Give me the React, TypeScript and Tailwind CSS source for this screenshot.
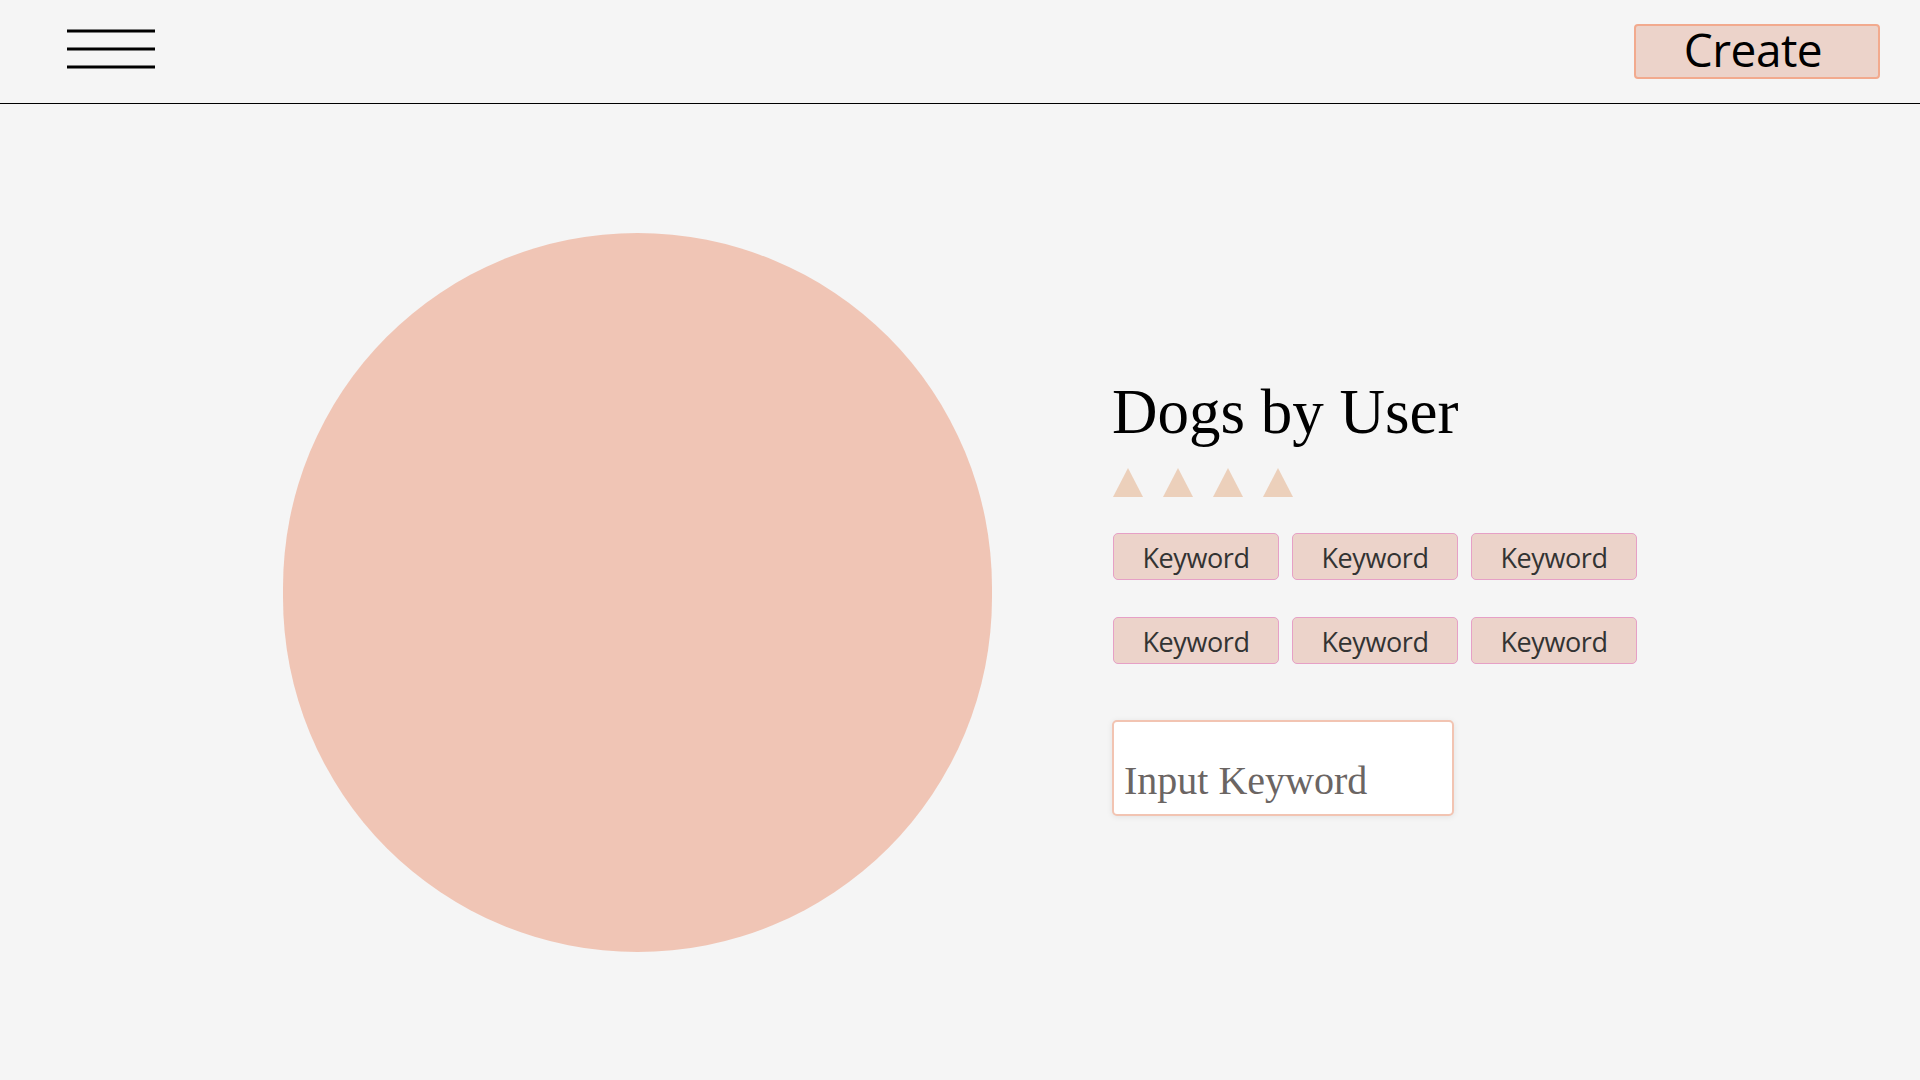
import React from "react";

const keywords = ["Keyword", "Keyword", "Keyword", "Keyword", "Keyword", "Keyword"];

function Triangle() {
  return (
    <svg width="30" height="29" viewBox="0 0 30 29" aria-hidden="true">
      <polygon points="15,0 30,29 0,29" fill="#ecd0bb" />
    </svg>
  );
}

export default function App() {
  return (
    <div className="min-h-screen w-full bg-[#f5f5f5] font-['Open_Sans',sans-serif]">
      {/* top bar */}
      <header className="flex h-[104px] items-center justify-between border-b border-black pl-[67px] pr-[40px]">
        <button aria-label="Menu" className="mt-[-6px]">
          <svg width="88" height="40" viewBox="0 0 88 40">
            <line x1="0" y1="2" x2="88" y2="2" stroke="#000" strokeWidth="3" />
            <line x1="0" y1="20" x2="88" y2="20" stroke="#000" strokeWidth="3" />
            <line x1="0" y1="38" x2="88" y2="38" stroke="#000" strokeWidth="3" />
          </svg>
        </button>
        <button className="flex h-[55px] w-[246px] items-center justify-center rounded-[4px] border-2 border-[#f2aa8e] bg-[#ecd3ca] pr-[8px] pb-[5px] text-[46px] leading-none tracking-[-0.5px] text-black">
          Create
        </button>
      </header>

      {/* content */}
      <main className="flex h-[976px] items-center justify-center gap-[120px]">
        <div className="h-[719px] w-[709px] rounded-full bg-[#f0c5b5]" />

        <div className="mt-[12px] flex w-[525px] flex-col">
          <h1 className="font-['Liberation_Serif',serif] text-[63px] leading-[64px] text-black">
            Dogs by User
          </h1>

          <div className="mt-[24px] ml-[1px] flex gap-[20px]">
            <Triangle />
            <Triangle />
            <Triangle />
            <Triangle />
          </div>

          <div className="mt-[36px] ml-[1px] grid grid-cols-[166px_166px_166px] gap-x-[13px] gap-y-[37px]">
            {keywords.map((k, i) => (
              <span
                key={i}
                className="flex h-[47px] items-center justify-center rounded-[5px] border border-[#e6a0c6] bg-[#ecd3ca] pt-[3px] text-[27px] tracking-[-0.4px] text-[#333333]"
              >
                {k}
              </span>
            ))}
          </div>

          <input
            type="text"
            placeholder="Input Keyword"
            className="mt-[56px] h-[96px] w-[342px] rounded-[5px] border-2 border-[#f2c4b2] bg-white px-[10px] pt-[24px] font-['Liberation_Serif',serif] text-[40px] text-[#6b6563] shadow-[0_1px_6px_rgba(0,0,0,0.08)] outline-none placeholder:text-[#6b6563]"
          />
        </div>
      </main>
    </div>
  );
}
